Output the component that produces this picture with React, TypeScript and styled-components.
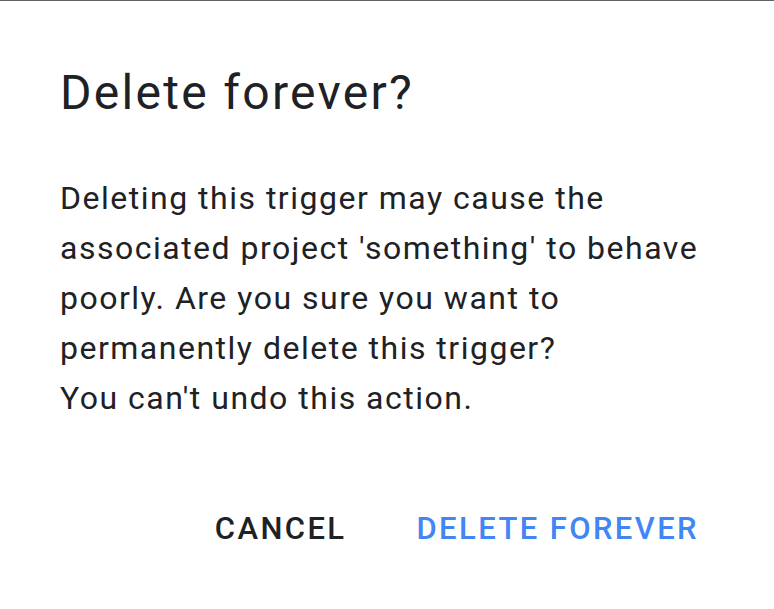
import styled, { createGlobalStyle } from "styled-components"

const GlobalStyle = createGlobalStyle`
  html, body {
    margin: 0;
    padding: 0;
    background: #ffffff;
  }
  body {
    font-family: Roboto, "Liberation Sans", sans-serif;
    -webkit-font-smoothing: antialiased;
  }
`

const Page = styled.div`
  width: 774px;
  height: 609px;
  box-sizing: border-box;
  border-top: 1px solid #5f6368;
  background: #ffffff;
  overflow: hidden;
`

const Dialog = styled.div`
  display: flex;
  flex-direction: column;
  padding: 64px 75px 0 60px;
`

const Title = styled.h1`
  margin: 0;
  font-size: 48px;
  line-height: 56px;
  font-weight: 400;
  letter-spacing: 2.3px;
  color: #202124;
`

const Body = styled.p`
  margin: 52px 0 0;
  font-size: 32px;
  line-height: 50px;
  letter-spacing: 1.5px;
  white-space: nowrap;
  color: #202124;
`

const Actions = styled.div`
  display: flex;
  justify-content: flex-end;
  align-items: center;
  gap: 70px;
  margin-top: 88px;
`

const ActionButton = styled.button<{ $primary?: boolean }>`
  border: none;
  background: none;
  padding: 0;
  font-family: inherit;
  font-size: 31px;
  line-height: 36px;
  font-weight: 500;
  letter-spacing: 2.4px;
  text-transform: uppercase;
  color: ${(p) => (p.$primary ? "#4285f4" : "#202124")};
  cursor: pointer;
`

export default function App() {
  return (
    <Page>
      <GlobalStyle />
      <Dialog>
        <Title>Delete forever?</Title>
        <Body>
          Deleting this trigger may cause the
          <br />
          associated project 'something' to behave
          <br />
          poorly. Are you sure you want to
          <br />
          permanently delete this trigger?
          <br />
          You can't undo this action.
        </Body>
        <Actions>
          <ActionButton>Cancel</ActionButton>
          <ActionButton $primary>Delete forever</ActionButton>
        </Actions>
      </Dialog>
    </Page>
  )
}
